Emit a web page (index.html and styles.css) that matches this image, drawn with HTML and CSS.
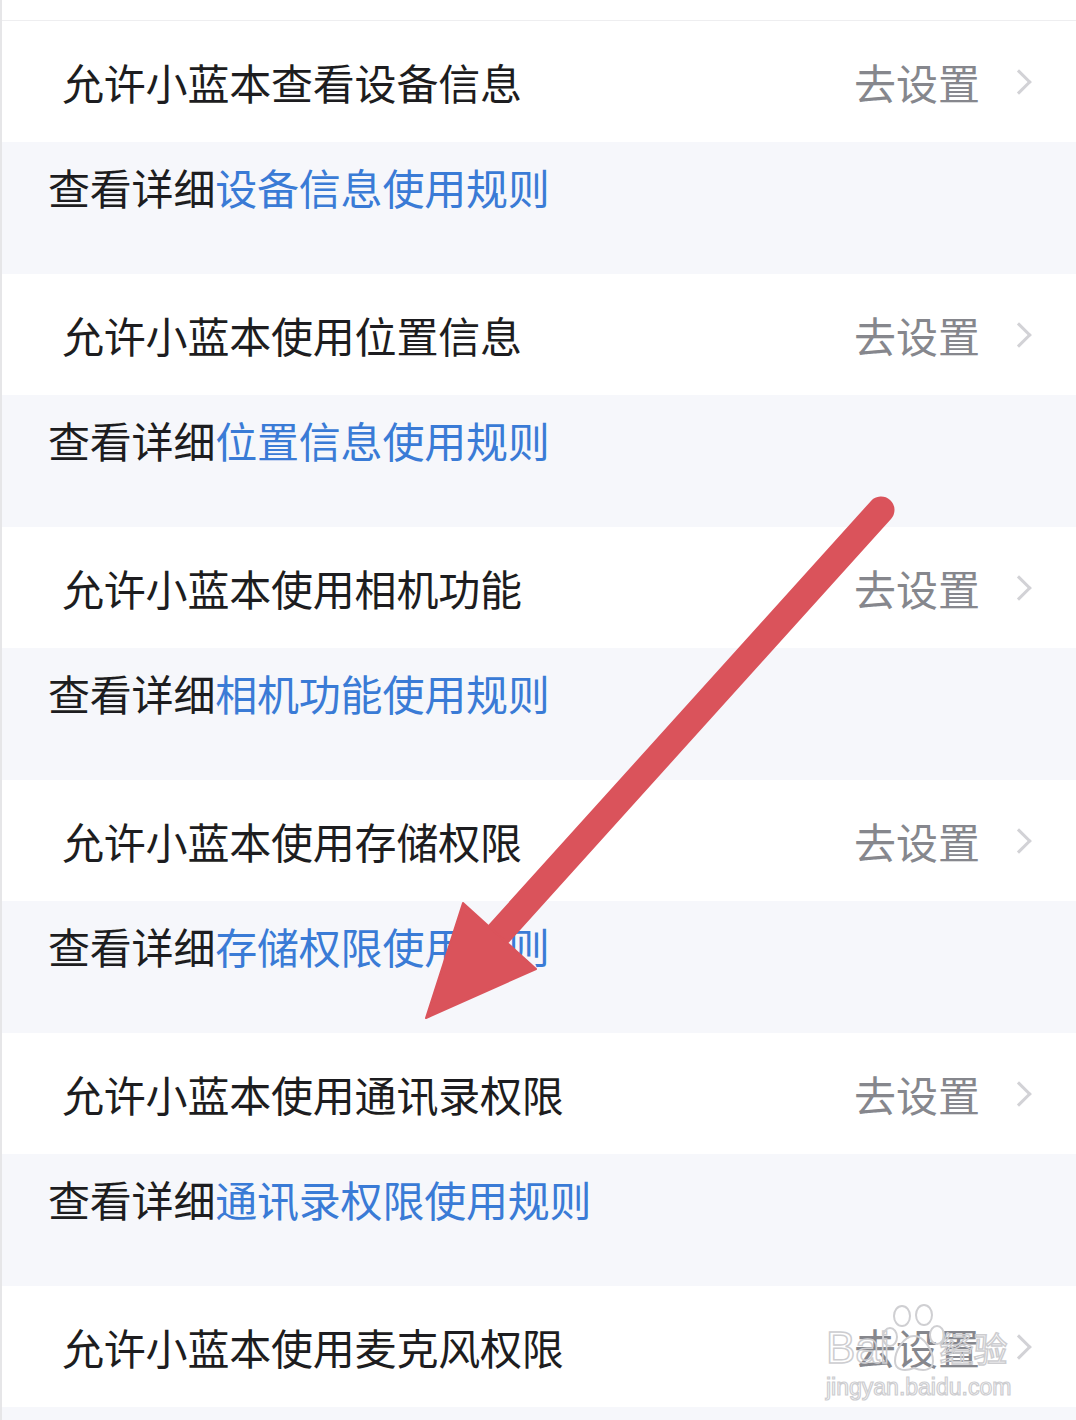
FILE: index.html
```html
<!DOCTYPE html>
<html lang="zh-CN">
<head>
<meta charset="utf-8">
<title>权限设置</title>
<link rel="stylesheet" href="styles.css">
</head>
<body>
<div class="page">
  <div class="top"></div>
  <div class="list">
    <div class="item"><span class="title">允许小蓝本查看设备信息</span><span class="action">去设置<span class="chev"></span></span></div>
    <div class="rule">查看详细<span class="link">设备信息使用规则</span></div>
    <div class="item"><span class="title">允许小蓝本使用位置信息</span><span class="action">去设置<span class="chev"></span></span></div>
    <div class="rule">查看详细<span class="link">位置信息使用规则</span></div>
    <div class="item"><span class="title">允许小蓝本使用相机功能</span><span class="action">去设置<span class="chev"></span></span></div>
    <div class="rule">查看详细<span class="link">相机功能使用规则</span></div>
    <div class="item"><span class="title">允许小蓝本使用存储权限</span><span class="action">去设置<span class="chev"></span></span></div>
    <div class="rule">查看详细<span class="link">存储权限使用规则</span></div>
    <div class="item"><span class="title">允许小蓝本使用通讯录权限</span><span class="action">去设置<span class="chev"></span></span></div>
    <div class="rule">查看详细<span class="link">通讯录权限使用规则</span></div>
    <div class="item"><span class="title">允许小蓝本使用麦克风权限</span><span class="action">去设置<span class="chev"></span></span></div>
    <div class="rule"></div>
  </div>

  <svg class="arrow" width="1076" height="1420" viewBox="0 0 1076 1420">
    <line x1="881" y1="510" x2="492" y2="941" stroke="#da535b" stroke-width="27" stroke-linecap="round"/>
    <polygon points="463,903 536,969 426,1018" fill="#da535b" stroke="#da535b" stroke-width="2" stroke-linejoin="round"/>
  </svg>

  <div class="watermark">
    <div class="wm-line"><span class="wm-b">Bai</span><svg class="paw" width="64" height="72" viewBox="0 0 64 72">
      <g fill="none" stroke="#cfcfd2" stroke-width="2">
        <ellipse cx="20" cy="12" rx="8" ry="10"/>
        <ellipse cx="42" cy="11" rx="8" ry="10"/>
        <ellipse cx="8" cy="33" rx="7" ry="9"/>
        <ellipse cx="55" cy="31" rx="7" ry="9"/>
        <path d="M32 32 C21 32 13 48 13 57 C13 66 22 68 32 64 C42 68 51 66 51 57 C51 48 43 32 32 32 Z"/>
      </g>
    </svg><span class="wm-j">经验</span></div>
    <div class="wm-url">jingyan.baidu.com</div>
  </div>
</div>
</body>
</html>
```

FILE: styles.css
```css
html, body {
  margin: 0;
  padding: 0;
  background: #ffffff;
}

.page {
  position: relative;
  width: 1076px;
  height: 1420px;
  overflow: hidden;
  box-sizing: border-box;
  border-left: 2px solid #e6e6e8;
  font-family: "Noto Sans CJK SC", "Noto Sans", sans-serif;
}

.top {
  height: 20px;
  border-bottom: 1px solid #eeeef0;
  background: #ffffff;
}

.list {
  display: flex;
  flex-direction: column;
}

.item {
  height: 121px;
  box-sizing: border-box;
  display: flex;
  align-items: center;
  justify-content: space-between;
  padding: 0 42px 0 60px;
  background: #ffffff;
}

.title {
  font-size: 42px;
  line-height: 1;
  color: #1d1d20;
  letter-spacing: -0.2px;
}

.action {
  display: flex;
  align-items: center;
  font-size: 42px;
  line-height: 1;
  color: #86878d;
}

.chev {
  display: inline-block;
  width: 15px;
  height: 15px;
  margin-left: 30px;
  margin-right: 6px;
  border-top: 3px solid #d2d2d6;
  border-right: 3px solid #d2d2d6;
  transform: rotate(45deg);
}

.rule {
  height: 132px;
  box-sizing: border-box;
  padding: 24px 0 0 46px;
  background: #f6f7fb;
  font-size: 42px;
  line-height: 1;
  color: #1d1d20;
  letter-spacing: -0.2px;
}

.link {
  color: #3a7bd6;
}

.arrow {
  position: absolute;
  left: -2px;
  top: 0;
  pointer-events: none;
}

.watermark {
  position: absolute;
  left: 824px;
  top: 1298px;
  width: 210px;
  display: flex;
  flex-direction: column;
  pointer-events: none;
}

.wm-line {
  display: flex;
  align-items: flex-end;
  height: 72px;
}

.wm-b,
.wm-j {
  font-family: "Liberation Sans", Arial, sans-serif;
  font-size: 44px;
  line-height: 1;
  color: transparent;
  -webkit-text-stroke: 1.5px #cdcdd0;
}

.wm-j {
  font-family: "Noto Sans CJK SC", sans-serif;
  font-size: 34px;
  margin-left: -6px;
  margin-bottom: 5px;
}

.paw {
  margin-left: -8px;
  margin-bottom: -6px;
}

.wm-url {
  font-family: "Liberation Sans", Arial, sans-serif;
  font-size: 23px;
  line-height: 1;
  margin-top: 6px;
  color: transparent;
  -webkit-text-stroke: 1.2px #cdcdd0;
}
```
